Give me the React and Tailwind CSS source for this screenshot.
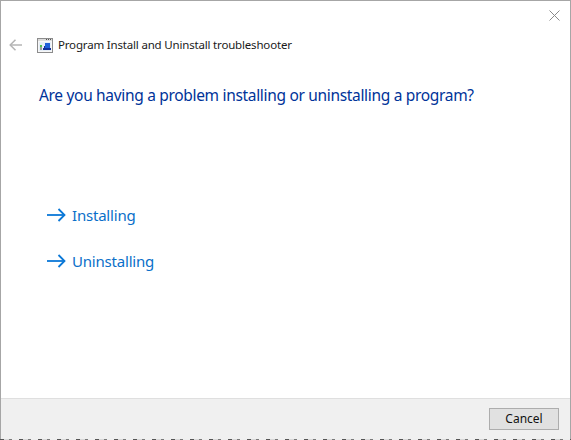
const font = { fontFamily: '"Noto Sans", "Open Sans", sans-serif' };

const LinkArrow = () => (
  <svg width="19" height="14" viewBox="0 0 19 14" fill="none" stroke="#0b78d7" strokeWidth="1.8" className="shrink-0">
    <path d="M0 7H17.5" />
    <path d="M11.5 1L17.5 7L11.5 13" />
  </svg>
);

const CommandLink = ({ label }) => (
  <div className="flex h-[46px] items-center gap-[6px] pl-[46px]">
    <LinkArrow />
    <span className="text-[15px] leading-5 tracking-[-0.2px] text-[#0a6fc9]">{label}</span>
  </div>
);

// small window with a blue block and a green status pip
const ProgramIcon = () => (
  <svg width="16" height="15" viewBox="0 0 16 15" className="shrink-0" shapeRendering="crispEdges">
    <rect x="0" y="0" width="16" height="15" fill="#8c8c8c" />
    <rect x="1" y="1" width="14" height="13" fill="#f7f7f7" />
    <rect x="1" y="1" width="14" height="2" fill="#dcdcdc" />
    <rect x="9" y="1" width="1" height="1" fill="#555" />
    <rect x="11" y="1" width="1" height="1" fill="#555" />
    <rect x="13" y="1" width="1" height="1" fill="#555" />
    <rect x="2" y="4" width="12" height="9" fill="#e6eef7" />
    <rect x="8" y="5" width="5" height="5" fill="#1e5fd8" />
    <rect x="6" y="10" width="8" height="2" fill="#12309a" />
    <rect x="7" y="8" width="1" height="2" fill="#12309a" />
    <rect x="3" y="7" width="2" height="2" fill="#4cc04c" />
    <rect x="3" y="9" width="2" height="3" fill="#9a9a9a" />
  </svg>
);

export default function App() {
  return (
    <div className="flex h-[440px] w-[571px] flex-col overflow-hidden bg-white" style={font}>
      <div className="relative flex min-h-0 flex-1 flex-col border-t border-r border-l border-[#a6a6a6]">
        <button className="absolute top-[9px] right-[10px] text-[#8a8a8a]" aria-label="Close">
          <svg width="11" height="11" viewBox="0 0 11 11" stroke="currentColor" fill="none">
            <path d="M0.5 0.5L10.5 10.5M10.5 0.5L0.5 10.5" />
          </svg>
        </button>

        <div className="flex items-center pt-[36px] pl-[8px]">
          <svg width="13" height="12" viewBox="0 0 13 12" fill="none" stroke="#b4b4b4" strokeWidth="1.5" className="shrink-0">
            <path d="M13 6H1.2" />
            <path d="M6.5 0.7L1.2 6L6.5 11.3" />
          </svg>
          <div className="ml-[15px]">
            <ProgramIcon />
          </div>
          <span className="ml-[5px] text-[11.5px] leading-4 tracking-[-0.18px] text-[#1a1a1a]">
            Program Install and Uninstall troubleshooter
          </span>
        </div>

        <h1 className="mt-[31px] pl-[38px] text-[15.5px] leading-[22px] font-normal tracking-[-0.32px] text-[#003399]">
          Are you having a problem installing or uninstalling a program?
        </h1>

        <div className="mt-[86px] flex flex-col">
          <CommandLink label="Installing" />
          <CommandLink label="Uninstalling" />
        </div>

        <div className="mt-auto flex h-[41px] items-start justify-end border-t border-[#dfdfdf] bg-[#f0f0f0] pt-[9px] pr-[11px]">
          <button className="h-[22px] w-[70px] border border-[#adadad] bg-[#e1e1e1] text-[12px] leading-none text-[#111]">
            Cancel
          </button>
        </div>
      </div>
      {/* sliver of whatever sits behind the dialog */}
      <div className="h-px shrink-0 bg-[repeating-linear-gradient(90deg,#555_0_4px,#d8d8d8_4px_9px,#7a7a7a_9px_12px,#eeeeee_12px_19px)]" />
    </div>
  );
}
